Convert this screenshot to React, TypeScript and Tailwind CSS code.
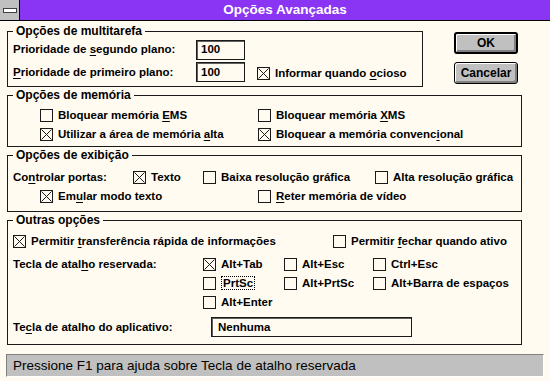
import type { ReactNode } from 'react';

function CheckBox({ checked = false }: { checked?: boolean }) {
  return (
    <svg width="13" height="13" viewBox="0 0 13 13" className="shrink-0" aria-hidden="true">
      <rect x="0.5" y="0.5" width="12" height="12" fill="#fffbf0" stroke="#1a1a1a" />
      {checked ? (
        <path d="M1.5 1.5L11.5 11.5M11.5 1.5L1.5 11.5" stroke="#1a1a1a" strokeWidth="1" />
      ) : null}
    </svg>
  );
}

function Option({
  checked,
  children,
  className = '',
}: {
  checked?: boolean;
  children: ReactNode;
  className?: string;
}) {
  return (
    <div className={['flex items-center gap-[5px] whitespace-nowrap', className].join(' ')}>
      <CheckBox checked={checked} />
      <span>{children}</span>
    </div>
  );
}

function Group({
  title,
  className = '',
  children,
}: {
  title: string;
  className?: string;
  children: ReactNode;
}) {
  return (
    <fieldset className={['border border-[#1a1a1a]', className].join(' ')}>
      <legend className="ml-[5px] px-[3px] text-[12px] font-bold leading-[14px]">{title}</legend>
      {children}
    </fieldset>
  );
}

function Button({ label, isDefault = false }: { label: string; isDefault?: boolean }) {
  return (
    <div
      className={[
        'flex h-[22px] w-[64px] items-center justify-center rounded-[3px] bg-[#c0c0c0] text-[12px] font-bold',
        'shadow-[inset_1px_1px_0_#ffffff,inset_-2px_-2px_0_#808080]',
        isDefault ? 'border-2 border-black' : 'border border-black',
      ].join(' ')}
    >
      {label}
    </div>
  );
}

function Field({ value, className = '' }: { value: string; className?: string }) {
  return (
    <div
      className={[
        'flex h-[20px] items-center border border-[#1a1a1a] bg-[#fffbf0] pl-[4px] font-bold shadow-[inset_1px_1px_0_#606060]',
        className,
      ].join(' ')}
    >
      {value}
    </div>
  );
}

export default function App() {
  return (
    <div className="flex h-[381px] w-[550px] flex-col overflow-hidden bg-[#fffbf0] font-['Liberation_Sans',Arial,sans-serif] text-[11.5px] font-bold text-black">
      {/* title bar */}
      <div className="flex h-[21px] shrink-0 border-b border-black bg-[#8a34f4]">
        <div className="flex h-full w-[20px] items-center justify-center border-r border-black bg-[#c0c0c0]">
          <div className="h-[5px] w-[14px] border border-[#404040] bg-white" />
        </div>
        <div className="flex flex-1 items-center justify-center text-[13.5px] font-bold text-white">
          Opções Avançadas
        </div>
      </div>

      <div className="flex flex-col px-[7px]">
        <div className="mt-[3px] flex items-start">
          <Group title="Opções de multitarefa" className="w-[416px]">
            <div className="flex flex-col gap-[2px] pb-[4px] pl-[5px] pt-[2px]">
              <div className="flex items-center">
                <span className="w-[183px]">
                  Prioridade de <u className="underline-offset-2">s</u>egundo plano:
                </span>
                <Field value="100" className="w-[49px]" />
              </div>
              <div className="flex items-center">
                <span className="w-[183px]">
                  <u className="underline-offset-2">P</u>rioridade de primeiro plano:
                </span>
                <Field value="100" className="w-[49px]" />
                <Option checked className="ml-[12px] mt-[3px]">
                  Informar quando <u className="underline-offset-2">o</u>cioso
                </Option>
              </div>
            </div>
          </Group>
          <div className="ml-[31px] mt-[8px] flex flex-col gap-[8px]">
            <Button label="OK" isDefault />
            <Button label="Cancelar" />
          </div>
        </div>

        <Group title="Opções de memória" className="mt-[1px] w-[515px]">
          <div className="flex flex-col pb-[2px] pl-[32px] pt-[4px]">
            <div className="flex h-[19px] items-center">
              <Option className="w-[218px]">
                Bloquear memória <u className="underline-offset-2">E</u>MS
              </Option>
              <Option>
                Bloquear memória <u className="underline-offset-2">X</u>MS
              </Option>
            </div>
            <div className="flex h-[19px] items-center">
              <Option checked className="w-[218px]">
                Utilizar a área de memória <u className="underline-offset-2">a</u>lta
              </Option>
              <Option checked>
                Bloquear a memória convenc<u className="underline-offset-2">i</u>onal
              </Option>
            </div>
          </div>
        </Group>

        <Group title="Opções de exibição" className="mt-[1px] w-[515px]">
          <div className="flex flex-col pb-[5px] pt-[5px]">
            <div className="flex h-[20px] items-center pl-[5px]">
              <span className="w-[120px]">
                Co<u className="underline-offset-2">n</u>trolar portas:
              </span>
              <Option checked className="w-[70px]">
                Texto
              </Option>
              <Option className="w-[172px]">Baixa resolução gráfica</Option>
              <Option>Alta resolução gráfica</Option>
            </div>
            <div className="flex h-[19px] items-center pl-[32px]">
              <Option checked className="w-[218px]">
                Em<u className="underline-offset-2">u</u>lar modo texto
              </Option>
              <Option>
                <u className="underline-offset-2">R</u>eter memória de vídeo
              </Option>
            </div>
          </div>
        </Group>

        <Group title="Outras opções" className="mt-[1px] w-[515px]">
          <div className="flex flex-col pb-[7px] pl-[5px] pt-[5px]">
            <div className="flex h-[19px] items-center">
              <Option checked className="w-[320px]">
                Permitir <u className="underline-offset-2">t</u>ransferência rápida de informações
              </Option>
              <Option>
                Permitir <u className="underline-offset-2">f</u>echar quando ativo
              </Option>
            </div>
            <div className="mt-[4px] grid grid-cols-[190px_81px_89px_auto] grid-rows-[19px_19px_19px] items-center">
              <span>
                Tecla de atal<u className="underline-offset-2">h</u>o reservada:
              </span>
              <Option checked>Alt+Tab</Option>
              <Option>Alt+Esc</Option>
              <Option>Ctrl+Esc</Option>
              <span />
              <Option>
                <span className="border border-dotted border-black px-[1px]">PrtSc</span>
              </Option>
              <Option>Alt+PrtSc</Option>
              <Option>Alt+Barra de espaços</Option>
              <span />
              <Option>Alt+Enter</Option>
            </div>
            <div className="mt-[5px] flex items-center">
              <span className="w-[198px]">
                Te<u className="underline-offset-2">c</u>la de atalho do aplicativo:
              </span>
              <Field value="Nenhuma" className="w-[201px] pl-[6px]" />
            </div>
          </div>
        </Group>
      </div>

      {/* status bar */}
      <div className="mx-[6px] mt-[9px] flex h-[23px] items-center border-b border-l border-r border-t border-b-white border-l-[#808080] border-r-white border-t-[#808080] bg-[#c0c0c0] pl-[6px] text-[13.5px] font-normal">
        Pressione F1 para ajuda sobre Tecla de atalho reservada
      </div>
    </div>
  );
}
